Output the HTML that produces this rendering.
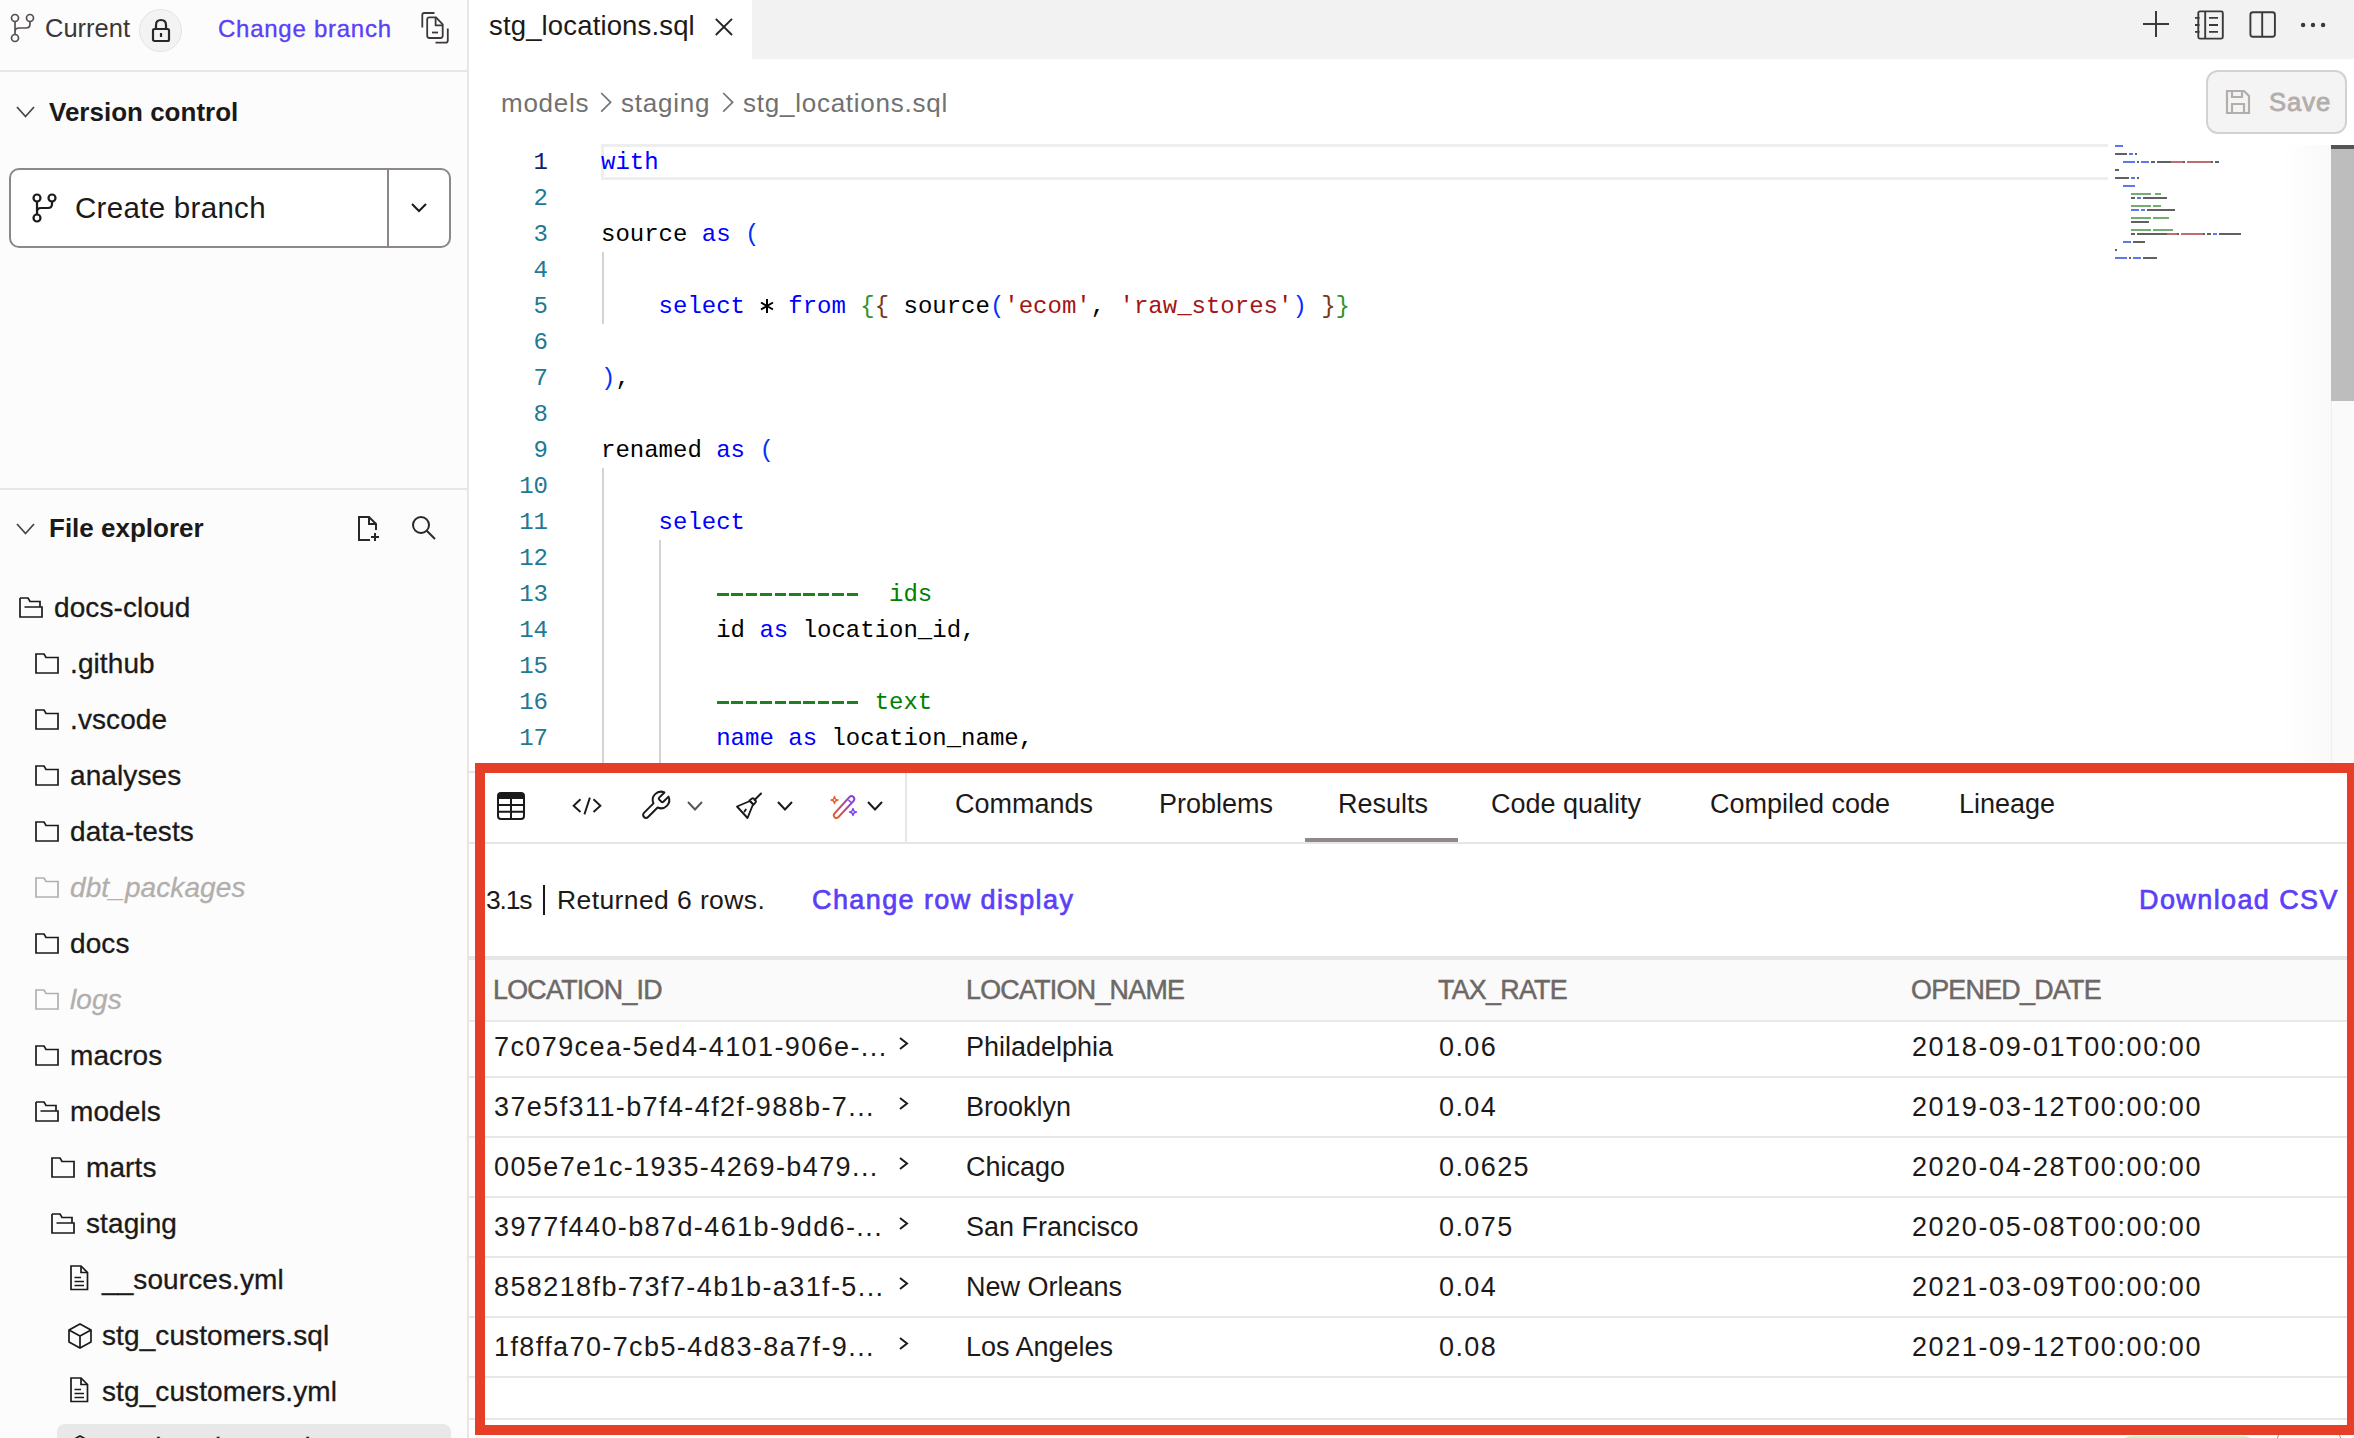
<!DOCTYPE html>
<html><head><meta charset="utf-8">
<style>
*{box-sizing:border-box;margin:0;padding:0}
html,body{width:2354px;height:1438px;overflow:hidden;background:#fff}
body{position:relative;font-family:"Liberation Sans",sans-serif;color:#1c1a19}
.a{position:absolute;white-space:pre}
svg{position:absolute;overflow:visible}
#side{position:absolute;left:0;top:0;width:469px;height:1438px;background:#fcfcfc;border-right:2px solid #e7e5e5}
.hl{position:absolute;height:2px;background:#e7e5e5}
.mono{font-family:"Liberation Mono",monospace;font-size:24px}
.ln{position:absolute;width:60px;left:488px;text-align:right;color:#237893;font-family:"Liberation Mono",monospace;font-size:24px;line-height:36px}
.code{position:absolute;left:601px;font-family:"Liberation Mono",monospace;font-size:24px;line-height:36px;color:#000;white-space:pre}
.k{color:#0000ff}.s{color:#a31515}.c{color:#008000}.b1{color:#0431fa}.b2{color:#319331}.b3{color:#7b3814}
.tree{position:absolute;font-size:28px;line-height:40px;color:#1c1a19;letter-spacing:0.1px;-webkit-text-stroke:0.3px currentColor}
.tab{position:absolute;top:784px;font-size:27px;line-height:40px;color:#1c1a19}
.th{position:absolute;top:969.6px;font-size:26.8px;line-height:40px;color:#6d6866;letter-spacing:-0.7px;-webkit-text-stroke:0.5px #6d6866}
.td{position:absolute;font-size:27px;line-height:40px;color:#1c1a19;letter-spacing:1.4px}
.tn{position:absolute;font-size:27px;line-height:40px;color:#1c1a19}
.rl{position:absolute;left:469px;width:1885px;height:2px;background:#e8e8e8}
.lnk{font-size:27px;line-height:40px;color:#5b3ff8;-webkit-text-stroke:0.7px #5b3ff8;letter-spacing:1.4px}
</style></head><body>

<!-- ============ SIDEBAR ============ -->
<div id="side"></div>
<div class="hl" style="left:0;top:70px;width:467px"></div>
<div class="hl" style="left:0;top:488px;width:467px"></div>

<!-- branch icon top -->
<svg style="left:10px;top:13px" width="26" height="30" viewBox="0 0 26 30" fill="none" stroke="#55504f" stroke-width="1.7">
 <circle cx="5" cy="5" r="3.5"/><circle cx="20" cy="5" r="3.5"/><circle cx="5" cy="25" r="3.5"/>
 <path d="M5 8.5V21.5M20 8.5V11Q20 15 16 15H9Q5 15 5 19"/>
</svg>
<div class="a" style="left:45px;top:8px;font-size:25.5px;line-height:40px;color:#3b3736">Current</div>
<div style="position:absolute;left:139px;top:8.5px;width:43px;height:43px;border-radius:50%;background:#f3f3f3;border:1px solid #e3e3e3"></div>
<svg style="left:151px;top:18px" width="20" height="26" viewBox="0 0 20 26" fill="none" stroke="#2a2726" stroke-width="2.2">
 <rect x="2" y="11" width="16" height="12" rx="1.5"/><path d="M5 11V7Q5 2 10 2Q15 2 15 7V11"/><path d="M10 15V19"/>
</svg>
<div class="a" style="left:218px;top:9.3px;font-size:24px;line-height:40px;color:#5b3ff8;letter-spacing:0.74px;-webkit-text-stroke:0.35px #5b3ff8">Change branch</div>
<svg style="left:415px;top:5px" width="40" height="45" viewBox="0 0 40 45" fill="none" stroke="#3d3938" stroke-width="1.8" stroke-linejoin="round">
 <path d="M7.3 22.5V10Q7.3 8 9.3 8H19.5"/><path d="M14.3 12.4H21L27.7 19.3V30.8Q27.7 33 25.5 33H14.3Q12.2 33 12.2 30.8V14.5Q12.2 12.4 14.3 12.4Z"/><path d="M20.6 12.6V20.4H27.5"/><path d="M17 27.5H23"/><path d="M32.8 23.5V35.5Q32.8 37.7 30.6 37.7H20.5"/>
</svg>

<!-- Version control -->
<svg style="left:16px;top:106px" width="19" height="12" viewBox="0 0 19 12" fill="none" stroke="#4a4645" stroke-width="1.8"><path d="M1 1L9.5 10.5L18 1"/></svg>
<div class="a" style="left:49px;top:92px;font-size:26px;line-height:40px;font-weight:bold;color:#1c1a19">Version control</div>

<!-- Create branch button -->
<div style="position:absolute;left:9px;top:168px;width:442px;height:80px;border:2px solid #8d8886;border-radius:10px;background:#fff"></div>
<div style="position:absolute;left:387px;top:169px;width:2px;height:78px;background:#8d8886"></div>
<svg style="left:32px;top:193px" width="26" height="30" viewBox="0 0 26 30" fill="none" stroke="#1c1a19" stroke-width="2.2">
 <circle cx="5" cy="5" r="3.5"/><circle cx="20" cy="5" r="3.5"/><circle cx="5" cy="25" r="3.5"/>
 <path d="M5 8.5V21.5M20 8.5V11Q20 15 16 15H9Q5 15 5 19"/>
</svg>
<div class="a" style="left:75px;top:188px;font-size:29.5px;line-height:40px;color:#1c1a19;letter-spacing:0.3px">Create branch</div>
<svg style="left:411px;top:203px" width="16" height="10" viewBox="0 0 16 10" fill="none" stroke="#1c1a19" stroke-width="2"><path d="M1 1L8 8L15 1"/></svg>

<!-- File explorer -->
<svg style="left:16px;top:523px" width="19" height="12" viewBox="0 0 19 12" fill="none" stroke="#4a4645" stroke-width="1.8"><path d="M1 1L9.5 10.5L18 1"/></svg>
<div class="a" style="left:49px;top:508px;font-size:26px;line-height:40px;font-weight:bold;color:#1c1a19">File explorer</div>
<svg style="left:357px;top:515px" width="24" height="28" viewBox="0 0 24 28" fill="none" stroke="#2a2726" stroke-width="2">
 <path d="M13 25H2V2H12L19 9V15"/><path d="M12 2V9H19"/><path d="M18 18V26M14 22H22"/>
</svg>
<svg style="left:411px;top:515px" width="26" height="26" viewBox="0 0 26 26" fill="none" stroke="#2a2726" stroke-width="2">
 <circle cx="10" cy="10" r="8"/><path d="M16 16L24 24"/>
</svg>

<!-- tree -->
<div style="position:absolute;left:57px;top:1424px;width:394px;height:40px;border-radius:8px;background:#e9e8e8"></div>
<svg style="left:18px;top:597px" width="26" height="22" viewBox="0 0 26 22" fill="none" stroke="#1c1a19" stroke-width="1.7" stroke-linejoin="miter"><path d="M2 1H10L12 4.5H22V10M6.5 10H24V20H2V1"/></svg>
<div class="tree" style="left:54px;top:588px;color:#1c1a19;">docs-cloud</div>
<svg style="left:34px;top:653px" width="26" height="22" viewBox="0 0 26 22" fill="none" stroke="#1c1a19" stroke-width="1.7" stroke-linejoin="miter"><path d="M2 1H10L12 4.5H24V20H2Z"/></svg>
<div class="tree" style="left:70px;top:644px;color:#1c1a19;">.github</div>
<svg style="left:34px;top:709px" width="26" height="22" viewBox="0 0 26 22" fill="none" stroke="#1c1a19" stroke-width="1.7" stroke-linejoin="miter"><path d="M2 1H10L12 4.5H24V20H2Z"/></svg>
<div class="tree" style="left:70px;top:700px;color:#1c1a19;">.vscode</div>
<svg style="left:34px;top:765px" width="26" height="22" viewBox="0 0 26 22" fill="none" stroke="#1c1a19" stroke-width="1.7" stroke-linejoin="miter"><path d="M2 1H10L12 4.5H24V20H2Z"/></svg>
<div class="tree" style="left:70px;top:756px;color:#1c1a19;">analyses</div>
<svg style="left:34px;top:821px" width="26" height="22" viewBox="0 0 26 22" fill="none" stroke="#1c1a19" stroke-width="1.7" stroke-linejoin="miter"><path d="M2 1H10L12 4.5H24V20H2Z"/></svg>
<div class="tree" style="left:70px;top:812px;color:#1c1a19;">data-tests</div>
<svg style="left:34px;top:877px" width="26" height="22" viewBox="0 0 26 22" fill="none" stroke="#b3aeac" stroke-width="1.7" stroke-linejoin="miter"><path d="M2 1H10L12 4.5H24V20H2Z"/></svg>
<div class="tree" style="left:70px;top:868px;color:#b3aeac;font-style:italic;">dbt_packages</div>
<svg style="left:34px;top:933px" width="26" height="22" viewBox="0 0 26 22" fill="none" stroke="#1c1a19" stroke-width="1.7" stroke-linejoin="miter"><path d="M2 1H10L12 4.5H24V20H2Z"/></svg>
<div class="tree" style="left:70px;top:924px;color:#1c1a19;">docs</div>
<svg style="left:34px;top:989px" width="26" height="22" viewBox="0 0 26 22" fill="none" stroke="#b3aeac" stroke-width="1.7" stroke-linejoin="miter"><path d="M2 1H10L12 4.5H24V20H2Z"/></svg>
<div class="tree" style="left:70px;top:980px;color:#b3aeac;font-style:italic;">logs</div>
<svg style="left:34px;top:1045px" width="26" height="22" viewBox="0 0 26 22" fill="none" stroke="#1c1a19" stroke-width="1.7" stroke-linejoin="miter"><path d="M2 1H10L12 4.5H24V20H2Z"/></svg>
<div class="tree" style="left:70px;top:1036px;color:#1c1a19;">macros</div>
<svg style="left:34px;top:1101px" width="26" height="22" viewBox="0 0 26 22" fill="none" stroke="#1c1a19" stroke-width="1.7" stroke-linejoin="miter"><path d="M2 1H10L12 4.5H22V10M6.5 10H24V20H2V1"/></svg>
<div class="tree" style="left:70px;top:1092px;color:#1c1a19;">models</div>
<svg style="left:50px;top:1157px" width="26" height="22" viewBox="0 0 26 22" fill="none" stroke="#1c1a19" stroke-width="1.7" stroke-linejoin="miter"><path d="M2 1H10L12 4.5H24V20H2Z"/></svg>
<div class="tree" style="left:86px;top:1148px;color:#1c1a19;">marts</div>
<svg style="left:50px;top:1213px" width="26" height="22" viewBox="0 0 26 22" fill="none" stroke="#1c1a19" stroke-width="1.7" stroke-linejoin="miter"><path d="M2 1H10L12 4.5H22V10M6.5 10H24V20H2V1"/></svg>
<div class="tree" style="left:86px;top:1204px;color:#1c1a19;">staging</div>
<svg style="left:70px;top:1265px" width="20" height="26" viewBox="0 0 20 26" fill="none" stroke="#1c1a19" stroke-width="1.7"><path d="M1 1H11L17.5 7.5V24.5H1Z"/><path d="M11 1V7.5H17.5"/><path d="M4.5 12.5H11M4.5 16.5H14M4.5 20.5H14"/></svg>
<div class="tree" style="left:102px;top:1260px;color:#1c1a19;">__sources.yml</div>
<svg style="left:67px;top:1323px" width="26" height="26" viewBox="0 0 26 26" fill="none" stroke="#1c1a19" stroke-width="1.7"><path d="M13 1L24 7V19L13 25L2 19V7Z"/><path d="M2 7L13 13L24 7M13 13V25"/></svg>
<div class="tree" style="left:102px;top:1316px;color:#1c1a19;">stg_customers.sql</div>
<svg style="left:70px;top:1377px" width="20" height="26" viewBox="0 0 20 26" fill="none" stroke="#1c1a19" stroke-width="1.7"><path d="M1 1H11L17.5 7.5V24.5H1Z"/><path d="M11 1V7.5H17.5"/><path d="M4.5 12.5H11M4.5 16.5H14M4.5 20.5H14"/></svg>
<div class="tree" style="left:102px;top:1372px;color:#1c1a19;">stg_customers.yml</div>
<svg style="left:67px;top:1435px" width="26" height="26" viewBox="0 0 26 26" fill="none" stroke="#1c1a19" stroke-width="1.7"><path d="M13 1L24 7V19L13 25L2 19V7Z"/><path d="M2 7L13 13L24 7M13 13V25"/></svg>
<div class="tree" style="left:102px;top:1428px;color:#1c1a19;">stg_locations.sql</div>

<!-- ============ EDITOR ============ -->
<div style="position:absolute;left:469px;top:0;width:1885px;height:59px;background:#f2f2f2"></div>
<div style="position:absolute;left:469px;top:0;width:283px;height:59px;background:#fff"></div>
<div class="a" style="left:489px;top:6px;font-size:27.5px;line-height:40px;color:#1c1a19;letter-spacing:0.15px">stg_locations.sql</div>
<svg style="left:714px;top:17px" width="20" height="20" viewBox="0 0 20 20" fill="none" stroke="#262322" stroke-width="1.9"><path d="M1.8 1.8L18 18M18 1.8L1.8 18"/></svg>
<!-- right tab icons -->
<svg style="left:2143px;top:11px" width="26" height="26" viewBox="0 0 26 26" fill="none" stroke="#3d3938" stroke-width="2"><path d="M13 0V26M0 13H26"/></svg>
<svg style="left:2195px;top:10px" width="30" height="30" viewBox="0 0 30 30" fill="none" stroke="#3d3938" stroke-width="1.9">
 <rect x="3.3" y="1.4" width="24.5" height="27.2" rx="1.5"/><path d="M10.2 1.4V28.6"/><path d="M14 7.9H23M14 15H23M14 21.9H23"/><path d="M0 7.9H4.5M0 15H4.5M0 21.9H4.5"/>
</svg>
<svg style="left:2248px;top:10px" width="28" height="28" viewBox="0 0 28 28" fill="none" stroke="#3d3938" stroke-width="1.9">
 <rect x="2.4" y="2.3" width="24.5" height="24.5" rx="2.5"/><path d="M14.2 2.3V26.8"/>
</svg>
<svg style="left:2298px;top:20px" width="30" height="10" viewBox="0 0 30 10" fill="#3d3938"><circle cx="5.1" cy="5" r="2.2"/><circle cx="15" cy="5" r="2.2"/><circle cx="25.1" cy="5" r="2.2"/></svg>

<!-- breadcrumb -->
<div class="a" style="left:501px;top:83px;font-size:26px;line-height:40px;color:#717171;letter-spacing:0.75px">models</div>
<svg style="left:600px;top:92px" width="12" height="21" viewBox="0 0 12 21" fill="none" stroke="#737373" stroke-width="1.7"><path d="M1.2 1L10.6 10.3L1.2 19.6"/></svg>
<div class="a" style="left:621px;top:83px;font-size:26px;line-height:40px;color:#717171;letter-spacing:0.75px">staging</div>
<svg style="left:721.5px;top:92px" width="12" height="21" viewBox="0 0 12 21" fill="none" stroke="#737373" stroke-width="1.7"><path d="M1.2 1L10.6 10.3L1.2 19.6"/></svg>
<div class="a" style="left:743px;top:83px;font-size:26px;line-height:40px;color:#717171;letter-spacing:0.75px">stg_locations.sql</div>

<!-- save button -->
<div style="position:absolute;left:2206px;top:70px;width:141px;height:64px;border:2px solid #d4d2d1;border-radius:12px;background:#f4f4f4"></div>
<svg style="left:2225px;top:89px" width="26" height="26" viewBox="0 0 26 26" fill="none" stroke="#b3adab" stroke-width="2.2">
 <path d="M2 2H19L24 7V24H2Z"/><path d="M7 2V8H17V2"/><path d="M7 24V15H19V24"/>
</svg>
<div class="a" style="left:2269px;top:81.7px;font-size:25.7px;line-height:40px;color:#b3adab;-webkit-text-stroke:0.8px #b3adab;letter-spacing:0.9px">Save</div>

<!-- current line highlight -->
<div style="position:absolute;left:601px;top:144px;width:1507px;height:36px;border:3px solid #eeeeee;border-right:none"></div>

<!-- line numbers & code -->
<div class="ln" style="top:145px;color:#0b216f">1</div>
<div class="code" style="top:145px"><span class="k">with</span></div>
<div class="ln" style="top:181px;color:#237893">2</div>
<div class="ln" style="top:217px;color:#237893">3</div>
<div class="code" style="top:217px">source <span class="k">as</span> <span class="b1">(</span></div>
<div class="ln" style="top:253px;color:#237893">4</div>
<div class="ln" style="top:289px;color:#237893">5</div>
<div class="code" style="top:289px">    <span class="k">select</span>   <span class="k">from</span> <span class="b2">{</span><span class="b3">{</span> source<span class="b1">(</span><span class="s">'ecom'</span>, <span class="s">'raw_stores'</span><span class="b1">)</span> <span class="b3">}</span><span class="b2">}</span></div>
<div class="ln" style="top:325px;color:#237893">6</div>
<div class="ln" style="top:361px;color:#237893">7</div>
<div class="code" style="top:361px"><span class="b1">)</span>,</div>
<div class="ln" style="top:397px;color:#237893">8</div>
<div class="ln" style="top:433px;color:#237893">9</div>
<div class="code" style="top:433px">renamed <span class="k">as</span> <span class="b1">(</span></div>
<div class="ln" style="top:469px;color:#237893">10</div>
<div class="ln" style="top:505px;color:#237893">11</div>
<div class="code" style="top:505px">    <span class="k">select</span></div>
<div class="ln" style="top:541px;color:#237893">12</div>
<div class="ln" style="top:577px;color:#237893">13</div>
<div class="code" style="top:577px">        <span class="c">            ids</span></div>
<div class="ln" style="top:613px;color:#237893">14</div>
<div class="code" style="top:613px">        id <span class="k">as</span> location_id,</div>
<div class="ln" style="top:649px;color:#237893">15</div>
<div class="ln" style="top:685px;color:#237893">16</div>
<div class="code" style="top:685px">        <span class="c">           text</span></div>
<div class="ln" style="top:721px;color:#237893">17</div>
<div class="code" style="top:721px">        <span class="k">name</span> <span class="k">as</span> location_name,</div>
<div style="position:absolute;left:717px;top:593px;width:144px;height:3px;background:repeating-linear-gradient(90deg,#1f801f 0 11.6px,transparent 11.6px 14.4px)"></div>
<div style="position:absolute;left:717px;top:701px;width:144px;height:3px;background:repeating-linear-gradient(90deg,#1f801f 0 11.6px,transparent 11.6px 14.4px)"></div>
<svg style="left:760px;top:298px" width="14" height="16" viewBox="0 0 14 16" fill="none" stroke="#000" stroke-width="2"><path d="M7 1V15M1 4.5L13 11.5M13 4.5L1 11.5"/></svg>

<!-- indent guides -->
<div style="position:absolute;left:602px;top:252px;width:2px;height:72px;background:#d3d3d3"></div>
<div style="position:absolute;left:602px;top:468px;width:2px;height:296px;background:#d3d3d3"></div>
<div style="position:absolute;left:659px;top:540px;width:2px;height:224px;background:#d3d3d3"></div>

<!-- minimap -->
<div style="position:absolute;left:2115px;top:144.5px;width:8px;height:2px;background:#3355ee;opacity:0.8"></div>
<div style="position:absolute;left:2115px;top:152.5px;width:12px;height:2px;background:#3a3a3a;opacity:0.8"></div>
<div style="position:absolute;left:2129px;top:152.5px;width:4px;height:2px;background:#3355ee;opacity:0.8"></div>
<div style="position:absolute;left:2135px;top:152.5px;width:2px;height:2px;background:#3a3a3a;opacity:0.8"></div>
<div style="position:absolute;left:2123px;top:160.5px;width:12px;height:2px;background:#3355ee;opacity:0.8"></div>
<div style="position:absolute;left:2137px;top:160.5px;width:2px;height:2px;background:#3a3a3a;opacity:0.8"></div>
<div style="position:absolute;left:2141px;top:160.5px;width:8px;height:2px;background:#3355ee;opacity:0.8"></div>
<div style="position:absolute;left:2151px;top:160.5px;width:2px;height:2px;background:#3a3a3a;opacity:0.8"></div>
<div style="position:absolute;left:2153px;top:160.5px;width:2px;height:2px;background:#3a3a3a;opacity:0.8"></div>
<div style="position:absolute;left:2157px;top:160.5px;width:12px;height:2px;background:#3a3a3a;opacity:0.8"></div>
<div style="position:absolute;left:2169px;top:160.5px;width:2px;height:2px;background:#3a3a3a;opacity:0.8"></div>
<div style="position:absolute;left:2171px;top:160.5px;width:12px;height:2px;background:#b04848;opacity:0.8"></div>
<div style="position:absolute;left:2183px;top:160.5px;width:2px;height:2px;background:#3a3a3a;opacity:0.8"></div>
<div style="position:absolute;left:2187px;top:160.5px;width:24px;height:2px;background:#b04848;opacity:0.8"></div>
<div style="position:absolute;left:2211px;top:160.5px;width:2px;height:2px;background:#3a3a3a;opacity:0.8"></div>
<div style="position:absolute;left:2215px;top:160.5px;width:2px;height:2px;background:#3a3a3a;opacity:0.8"></div>
<div style="position:absolute;left:2217px;top:160.5px;width:2px;height:2px;background:#3a3a3a;opacity:0.8"></div>
<div style="position:absolute;left:2115px;top:168.5px;width:2px;height:2px;background:#3a3a3a;opacity:0.8"></div>
<div style="position:absolute;left:2117px;top:168.5px;width:2px;height:2px;background:#3a3a3a;opacity:0.8"></div>
<div style="position:absolute;left:2115px;top:176.5px;width:14px;height:2px;background:#3a3a3a;opacity:0.8"></div>
<div style="position:absolute;left:2131px;top:176.5px;width:4px;height:2px;background:#3355ee;opacity:0.8"></div>
<div style="position:absolute;left:2137px;top:176.5px;width:2px;height:2px;background:#3a3a3a;opacity:0.8"></div>
<div style="position:absolute;left:2123px;top:184.5px;width:12px;height:2px;background:#3355ee;opacity:0.8"></div>
<div style="position:absolute;left:2131px;top:192.5px;width:20px;height:2px;background:#4f9a4f;opacity:0.8"></div>
<div style="position:absolute;left:2155px;top:192.5px;width:6px;height:2px;background:#4f9a4f;opacity:0.8"></div>
<div style="position:absolute;left:2131px;top:196.5px;width:4px;height:2px;background:#3a3a3a;opacity:0.8"></div>
<div style="position:absolute;left:2137px;top:196.5px;width:4px;height:2px;background:#3355ee;opacity:0.8"></div>
<div style="position:absolute;left:2143px;top:196.5px;width:22px;height:2px;background:#3a3a3a;opacity:0.8"></div>
<div style="position:absolute;left:2165px;top:196.5px;width:2px;height:2px;background:#3a3a3a;opacity:0.8"></div>
<div style="position:absolute;left:2131px;top:204.5px;width:20px;height:2px;background:#4f9a4f;opacity:0.8"></div>
<div style="position:absolute;left:2153px;top:204.5px;width:8px;height:2px;background:#4f9a4f;opacity:0.8"></div>
<div style="position:absolute;left:2131px;top:208.5px;width:8px;height:2px;background:#3355ee;opacity:0.8"></div>
<div style="position:absolute;left:2141px;top:208.5px;width:4px;height:2px;background:#3355ee;opacity:0.8"></div>
<div style="position:absolute;left:2147px;top:208.5px;width:26px;height:2px;background:#3a3a3a;opacity:0.8"></div>
<div style="position:absolute;left:2173px;top:208.5px;width:2px;height:2px;background:#3a3a3a;opacity:0.8"></div>
<div style="position:absolute;left:2131px;top:216.5px;width:20px;height:2px;background:#4f9a4f;opacity:0.8"></div>
<div style="position:absolute;left:2153px;top:216.5px;width:16px;height:2px;background:#4f9a4f;opacity:0.8"></div>
<div style="position:absolute;left:2131px;top:220.5px;width:16px;height:2px;background:#3a3a3a;opacity:0.8"></div>
<div style="position:absolute;left:2147px;top:220.5px;width:2px;height:2px;background:#3a3a3a;opacity:0.8"></div>
<div style="position:absolute;left:2131px;top:228.5px;width:20px;height:2px;background:#4f9a4f;opacity:0.8"></div>
<div style="position:absolute;left:2153px;top:228.5px;width:20px;height:2px;background:#4f9a4f;opacity:0.8"></div>
<div style="position:absolute;left:2131px;top:232.5px;width:2px;height:2px;background:#3a3a3a;opacity:0.8"></div>
<div style="position:absolute;left:2133px;top:232.5px;width:2px;height:2px;background:#3a3a3a;opacity:0.8"></div>
<div style="position:absolute;left:2137px;top:232.5px;width:28px;height:2px;background:#3a3a3a;opacity:0.8"></div>
<div style="position:absolute;left:2165px;top:232.5px;width:2px;height:2px;background:#3a3a3a;opacity:0.8"></div>
<div style="position:absolute;left:2167px;top:232.5px;width:10px;height:2px;background:#b04848;opacity:0.8"></div>
<div style="position:absolute;left:2177px;top:232.5px;width:2px;height:2px;background:#3a3a3a;opacity:0.8"></div>
<div style="position:absolute;left:2181px;top:232.5px;width:22px;height:2px;background:#b04848;opacity:0.8"></div>
<div style="position:absolute;left:2203px;top:232.5px;width:2px;height:2px;background:#3a3a3a;opacity:0.8"></div>
<div style="position:absolute;left:2207px;top:232.5px;width:2px;height:2px;background:#3a3a3a;opacity:0.8"></div>
<div style="position:absolute;left:2209px;top:232.5px;width:2px;height:2px;background:#3a3a3a;opacity:0.8"></div>
<div style="position:absolute;left:2213px;top:232.5px;width:4px;height:2px;background:#3355ee;opacity:0.8"></div>
<div style="position:absolute;left:2219px;top:232.5px;width:22px;height:2px;background:#3a3a3a;opacity:0.8"></div>
<div style="position:absolute;left:2123px;top:240.5px;width:8px;height:2px;background:#3355ee;opacity:0.8"></div>
<div style="position:absolute;left:2133px;top:240.5px;width:12px;height:2px;background:#3a3a3a;opacity:0.8"></div>
<div style="position:absolute;left:2115px;top:248.5px;width:2px;height:2px;background:#3a3a3a;opacity:0.8"></div>
<div style="position:absolute;left:2115px;top:256.5px;width:12px;height:2px;background:#3355ee;opacity:0.8"></div>
<div style="position:absolute;left:2129px;top:256.5px;width:2px;height:2px;background:#3a3a3a;opacity:0.8"></div>
<div style="position:absolute;left:2133px;top:256.5px;width:8px;height:2px;background:#3355ee;opacity:0.8"></div>
<div style="position:absolute;left:2143px;top:256.5px;width:14px;height:2px;background:#3a3a3a;opacity:0.8"></div>
<!-- scrollbar -->
<div style="position:absolute;left:2280px;top:145px;width:51px;height:618px;background:linear-gradient(90deg,rgba(0,0,0,0),rgba(0,0,0,0.025))"></div>
<div style="position:absolute;left:2331px;top:145px;width:23px;height:618px;background:#fafafa;border-left:1px solid #efefef"></div>
<div style="position:absolute;left:2331px;top:145px;width:23px;height:256px;background:#bdbdbd"></div>
<div style="position:absolute;left:2331px;top:145px;width:23px;height:4px;background:#555"></div>

<!-- ============ BOTTOM PANEL ============ -->
<div style="position:absolute;left:469px;top:763px;width:1885px;height:675px;background:#fff"></div>
<div style="position:absolute;left:469px;top:842px;width:1885px;height:2px;background:#e6e6e6"></div>
<div style="position:absolute;left:469px;top:771px;width:1885px;height:2px;background:#e6e6e6"></div>
<div style="position:absolute;left:905px;top:773px;width:2px;height:69px;background:#e6e6e6"></div>
<svg style="left:497px;top:792px" width="28" height="28" viewBox="0 0 28 28">
<rect x="1" y="1" width="26" height="26" rx="3" fill="none" stroke="#1c1a19" stroke-width="2"/>
<path d="M1 4Q1 1 4 1H24Q27 1 27 4V7H1Z" fill="#1c1a19"/>
<path d="M1 12.9H27M1 19.8H27M14 7V27" stroke="#1c1a19" stroke-width="2"/></svg>
<svg style="left:572px;top:797px" width="30" height="18" viewBox="0 0 30 18" fill="none" stroke="#1c1a19" stroke-width="1.9">
<path d="M8.5 2.3L1.6 8.7L8.5 15M21.5 2.3L28.4 8.7L21.5 15M17.9 0.6L12.4 17.4"/></svg>
<svg style="left:638.5px;top:789px" width="33" height="33" viewBox="0 0 24 24" fill="none" stroke="#1c1a19" stroke-width="1.45" stroke-linecap="round" stroke-linejoin="round">
<path d="M14.7 6.3a1 1 0 0 0 0 1.4l1.6 1.6a1 1 0 0 0 1.4 0l3.77-3.77a6 6 0 0 1-7.94 7.94l-6.91 6.91a2.12 2.12 0 0 1-3-3l6.91-6.91a6 6 0 0 1 7.94-7.94l-3.76 3.76z"/></svg>
<svg style="left:735px;top:792px" width="28" height="28" viewBox="0 0 28 28" fill="none" stroke="#1c1a19" stroke-width="1.9" stroke-linejoin="round" stroke-linecap="round">
<path d="M26 1.5L19.5 8"/><path d="M14.5 8.5L17 6.5Q18 5.8 18.8 6.6L20.6 8.4Q21.4 9.2 20.7 10.2L18.6 12.7Z"/><path d="M15 9L2 14.5L12.5 26L18 12.5Z"/><path d="M9.5 19.5L10.8 17.5"/></svg>
<svg style="left:828px;top:791px" width="32" height="28" viewBox="0 0 32 28">
<defs><linearGradient id="wg" x1="0" y1="1" x2="1" y2="0"><stop offset="0" stop-color="#ee5a24"/><stop offset="1" stop-color="#7b3ff2"/></linearGradient></defs>
<path d="M6.5 22.5L21.5 6Q23.5 4 25.5 6Q27.3 8 25.5 10L10.5 26Q8.5 28 6.6 26.2Q4.8 24.4 6.5 22.5Z" fill="none" stroke="url(#wg)" stroke-width="1.9"/>
<path d="M20.5 9L23 11.3" stroke="#8a43e6" stroke-width="1.6"/>
<path d="M6.5 5.5Q6.8 8.8 10 9Q6.8 9.2 6.5 12.5Q6.2 9.2 3 9Q6.2 8.8 6.5 5.5Z" fill="none" stroke="#ee5a24" stroke-width="1.4" stroke-linejoin="round"/>
<path d="M25 17.5Q25.3 20.8 28.5 21Q25.3 21.2 25 24.5Q24.7 21.2 21.5 21Q24.7 20.8 25 17.5Z" fill="none" stroke="#7b3ff2" stroke-width="1.4" stroke-linejoin="round"/></svg>
<svg style="left:687px;top:801px" width="16" height="10" viewBox="0 0 16 10" fill="none" stroke="#5a5654" stroke-width="2"><path d="M1 1L8 8.5L15 1"/></svg>
<svg style="left:777px;top:801px" width="16" height="10" viewBox="0 0 16 10" fill="none" stroke="#1c1a19" stroke-width="2"><path d="M1 1L8 8.5L15 1"/></svg>
<svg style="left:867px;top:801px" width="16" height="10" viewBox="0 0 16 10" fill="none" stroke="#1c1a19" stroke-width="2"><path d="M1 1L8 8.5L15 1"/></svg>
<div class="tab" style="left:955px">Commands</div>
<div class="tab" style="left:1159px">Problems</div>
<div class="tab" style="left:1338px">Results</div>
<div class="tab" style="left:1491px">Code quality</div>
<div class="tab" style="left:1710px">Compiled code</div>
<div class="tab" style="left:1959px">Lineage</div>
<div style="position:absolute;left:1305px;top:838px;width:153px;height:4px;background:#8f8a89"></div>
<div class="a" style="left:486px;top:880px;font-size:26.5px;line-height:40px;color:#1c1a19;letter-spacing:-1.2px">3.1s</div>
<div style="position:absolute;left:543px;top:885px;width:2px;height:30px;background:#1c1a19"></div>
<div class="a" style="left:557px;top:880px;font-size:26.5px;line-height:40px;color:#1c1a19;letter-spacing:0.4px">Returned 6 rows.</div>
<div class="a lnk" style="left:812px;top:880px">Change row display</div>
<div class="a lnk" style="left:2139px;top:880px">Download CSV</div>
<div style="position:absolute;left:469px;top:956px;width:1885px;height:4px;background:#e6e6e8"></div>
<div style="position:absolute;left:469px;top:960px;width:1885px;height:60px;background:#fafafa"></div>
<div class="th" style="left:493px">LOCATION_ID</div>
<div class="th" style="left:966px">LOCATION_NAME</div>
<div class="th" style="left:1438px">TAX_RATE</div>
<div class="th" style="left:1911px">OPENED_DATE</div>
<div class="rl" style="top:1020px"></div>
<div class="rl" style="top:1076px"></div>
<div class="rl" style="top:1136px"></div>
<div class="rl" style="top:1196px"></div>
<div class="rl" style="top:1256px"></div>
<div class="rl" style="top:1316px"></div>
<div class="rl" style="top:1376px"></div>
<div class="rl" style="top:1418px"></div>
<div class="td" style="left:494px;top:1027px">7c079cea-5ed4-4101-906e-...</div>
<svg style="left:899px;top:1037px" width="10" height="14" viewBox="0 0 10 14" fill="none" stroke="#1c1a19" stroke-width="2"><path d="M1 1L8 6.5L1 12"/></svg>
<div class="tn" style="left:966px;top:1027px">Philadelphia</div>
<div class="td" style="left:1439px;top:1027px">0.06</div>
<div class="td" style="left:1912px;top:1027px;letter-spacing:1.6px">2018-09-01T00:00:00</div>
<div class="td" style="left:494px;top:1087px">37e5f311-b7f4-4f2f-988b-7...</div>
<svg style="left:899px;top:1097px" width="10" height="14" viewBox="0 0 10 14" fill="none" stroke="#1c1a19" stroke-width="2"><path d="M1 1L8 6.5L1 12"/></svg>
<div class="tn" style="left:966px;top:1087px">Brooklyn</div>
<div class="td" style="left:1439px;top:1087px">0.04</div>
<div class="td" style="left:1912px;top:1087px;letter-spacing:1.6px">2019-03-12T00:00:00</div>
<div class="td" style="left:494px;top:1147px">005e7e1c-1935-4269-b479...</div>
<svg style="left:899px;top:1157px" width="10" height="14" viewBox="0 0 10 14" fill="none" stroke="#1c1a19" stroke-width="2"><path d="M1 1L8 6.5L1 12"/></svg>
<div class="tn" style="left:966px;top:1147px">Chicago</div>
<div class="td" style="left:1439px;top:1147px">0.0625</div>
<div class="td" style="left:1912px;top:1147px;letter-spacing:1.6px">2020-04-28T00:00:00</div>
<div class="td" style="left:494px;top:1207px">3977f440-b87d-461b-9dd6-...</div>
<svg style="left:899px;top:1217px" width="10" height="14" viewBox="0 0 10 14" fill="none" stroke="#1c1a19" stroke-width="2"><path d="M1 1L8 6.5L1 12"/></svg>
<div class="tn" style="left:966px;top:1207px">San Francisco</div>
<div class="td" style="left:1439px;top:1207px">0.075</div>
<div class="td" style="left:1912px;top:1207px;letter-spacing:1.6px">2020-05-08T00:00:00</div>
<div class="td" style="left:494px;top:1267px">858218fb-73f7-4b1b-a31f-5...</div>
<svg style="left:899px;top:1277px" width="10" height="14" viewBox="0 0 10 14" fill="none" stroke="#1c1a19" stroke-width="2"><path d="M1 1L8 6.5L1 12"/></svg>
<div class="tn" style="left:966px;top:1267px">New Orleans</div>
<div class="td" style="left:1439px;top:1267px">0.04</div>
<div class="td" style="left:1912px;top:1267px;letter-spacing:1.6px">2021-03-09T00:00:00</div>
<div class="td" style="left:494px;top:1327px">1f8ffa70-7cb5-4d83-8a7f-9...</div>
<svg style="left:899px;top:1337px" width="10" height="14" viewBox="0 0 10 14" fill="none" stroke="#1c1a19" stroke-width="2"><path d="M1 1L8 6.5L1 12"/></svg>
<div class="tn" style="left:966px;top:1327px">Los Angeles</div>
<div class="td" style="left:1439px;top:1327px">0.08</div>
<div class="td" style="left:1912px;top:1327px;letter-spacing:1.6px">2021-09-12T00:00:00</div>
<div style="position:absolute;left:2121px;top:1436px;width:133px;height:20px;border-radius:10px;background:#c6f7c6"></div>
<div style="position:absolute;left:2270px;top:1435px;width:80px;height:3px;overflow:hidden"><div style="position:absolute;left:5px;top:-20px;width:68px;height:68px;border-radius:50%;border:1.5px solid #888"></div></div>

<div style="position:absolute;left:475px;top:763px;width:1879px;height:672px;border:10px solid #e73f27;border-right-width:7px"></div>
</body></html>
